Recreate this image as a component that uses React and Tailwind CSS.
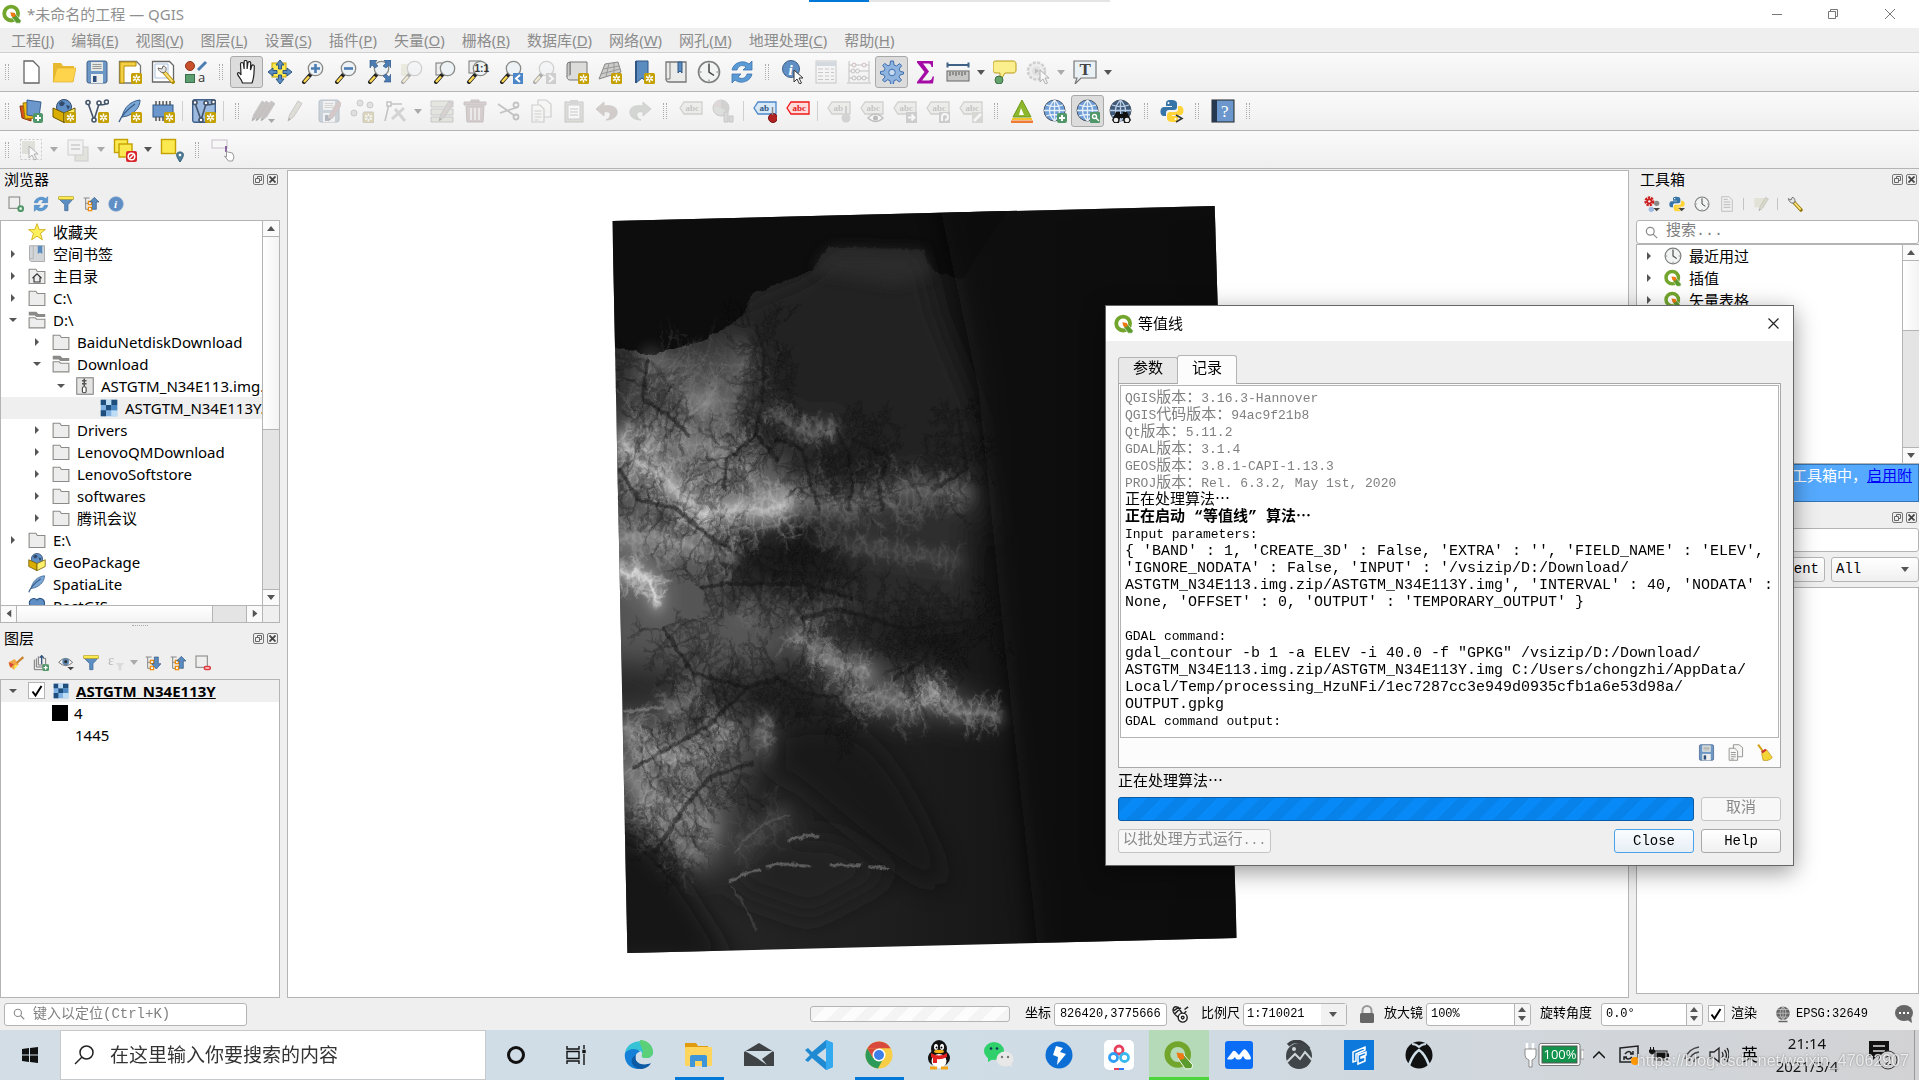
import React, { useState } from 'react';

/* ---------- shared icon parts ---------- */

const Badge = () => (
  <g>
    <rect x="13" y="13" width="11" height="11" rx="1.5" fill="#c4a000" />
    <path d="M18.5 14.5v8M15 16.5l7 4M22 16.5l-7 4" stroke="#fff" strokeWidth="1.5" />
    <circle cx="18.5" cy="18.5" r="1" fill="#c4a000" />
  </g>
);

const Lens = ({ fill = '#edf2f6' }) => (
  <g>
    <path d="M9.5 14.5L3 22" stroke="#222" strokeWidth="4" strokeLinecap="round" />
    <path d="M8 16.5L3 22" stroke="#fcd94e" strokeWidth="2.4" />
    <circle cx="14.5" cy="8.5" r="7.2" fill={fill} stroke="#888a85" strokeWidth="1.3" />
  </g>
);

const Globe = ({ dark }) => (
  <g>
    <circle cx="11.5" cy="11.5" r="10.5" fill={dark ? '#3d5a7c' : '#6f9fd8'} stroke="#4a5563" />
    <path
      d="M11.5 1v21M1 11.5h21M3 6q8.5 3 17 0M3 17q8.5-3 17 0M11.5 1q-10 10.5 0 21M11.5 1q10 10.5 0 21"
      stroke={dark ? '#b9cce2' : '#e6eef7'}
      strokeWidth="1.3"
      fill="none"
    />
  </g>
);

const Tag = ({ fill = '#dcdccb', stroke = '#8d8d80', color = '#666', text = 'abc' }) => (
  <g>
    <path d="M1 9l4-6h18v12H5z" fill={fill} stroke={stroke} strokeWidth="1.3" />
    <text x="6.5" y="12" fontSize="9" fontFamily="Liberation Serif, serif" fontWeight="bold" fill={color}>{text}</text>
  </g>
);

const Pencil = ({ x = 0, color = '#b8b48a' }) => (
  <g transform={`translate(${x} 0)`}>
    <path d="M5 22l1.5-6L15 2l4 2.5L10.5 18z" fill={color} stroke="#777" />
    <path d="M5 22l.7-3 2 1.2z" fill="#333" />
  </g>
);

const Cursor = ({ x = 11, y = 9 }) => (
  <path transform={`translate(${x} ${y})`} d="M1 1v12l3-3 2.5 5 2-1-2.5-5h4z" fill="#fff" stroke="#333" />
);

const Floppy = () => (
  <g>
    <rect x="2" y="1" width="20" height="22" rx="2" fill="#6d97c4" stroke="#41618a" />
    <rect x="6" y="2" width="12" height="9" fill="#e4e7e4" />
    <path d="M7.5 4.5h9M7.5 6.5h9M7.5 8.5h9" stroke="#999" />
    <rect x="6" y="14" width="12" height="9" fill="#eceeee" />
    <rect x="8" y="16" width="3.5" height="6" fill="#2f4f7a" />
  </g>
);

const Pages = () => (
  <g fill="#f6f6f4" stroke="#888a85" strokeWidth="1.2">
    <path d="M9 1h8l5 4v13H9z" />
    <path d="M3 6h8l4 4v13H3z" />
    <path d="M5.5 12h7M5.5 15h7M5.5 18h7M5.5 21h4" />
  </g>
);

const Tree = ({ up }) => (
  <g fill="none">
    <path d="M1 3h9M4 3v17h5M4 11h5" stroke="#888" strokeWidth="1.5" />
    <rect x="8" y="8" width="5" height="5" stroke="#f18b00" strokeWidth="1.8" />
    <rect x="8" y="17" width="5" height="5" stroke="#f18b00" strokeWidth="1.8" />
    <path d={up ? 'M14 20V9h-4l7-7 7 7h-4v11z' : 'M14 3v10h-4l7 8 7-8h-4V3z'} fill="#5a8cc0" stroke="#35557d" />
  </g>
);

const Funnel = () => (
  <g>
    <path d="M1 4h22l-8 9v9h-5v-9z" fill="#5b8fc4" stroke="#36608f" />
    <rect x="1" y="1" width="22" height="4" fill="#fce94f" stroke="#b8a020" />
  </g>
);

const Sync = () => (
  <g fill="#5b9bd5" stroke="#3c73b0" strokeWidth=".8">
    <path d="M2 10C3 3 13-1 19 4l3-3v9h-9l3-3C12 4 8 6 7 10z" />
    <path d="M22 14c-1 7-11 11-17 6l-3 3v-9h9l-3 3c4 3 8 1 9-3z" />
  </g>
);

const Python = () => (
  <g>
    <path d="M11 1c-5 0-5 2-5 4v2h6v1H4c-3 0-3.5 3-3.5 5S1.5 17 4 17h2v-3c0-2 1-3 3-3h5c2 0 3-1 3-3V5c0-3-2-4-6-4z" fill="#3775a9" />
    <path d="M13 23c5 0 5-2 5-4v-2h-6v-1h8c2.5 0 3.5-2 3.5-4.5S22 7 20 7h-2v3c0 2-1 3-3 3h-5c-2 0-3 1-3 3v3c0 3 2 4 6 4z" fill="#ffd43b" />
    <circle cx="8.5" cy="4" r="1" fill="#fff" />
    <circle cx="15.5" cy="20" r="1" fill="#fff" />
  </g>
);

const Clock = () => (
  <g>
    <circle cx="12" cy="12" r="10.5" fill="#f2f4f3" stroke="#7d807d" strokeWidth="1.6" />
    <path d="M12 4v8l5 3.5" stroke="#444" strokeWidth="1.5" fill="none" />
    <path d="M12 2.5v2M12 19.5v2M2.5 12h2M19.5 12h2" stroke="#777" />
  </g>
);

const Qgis = () => (
  <g>
    <circle cx="11" cy="11.5" r="8.3" fill="none" stroke="#72a52b" strokeWidth="4.6" />
    <path d="M11 11l5 1 7 8-1 3h-5l-5-7z" fill="#5b9a2d" stroke="#fff" strokeWidth=".7" />
    <path d="M10 10l5.5.8 1 4-3.5 1.2-2-2z" fill="#ee7913" />
  </g>
);

const Folder = () => (
  <path d="M1.5 3h9l2 3h10v16h-21z" fill="#ededed" stroke="#8b8b87" strokeWidth="1.5" />
);

const BoxGlobe = () => (
  <g>
    <circle cx="12" cy="8" r="7.5" fill="#5f8fc5" stroke="#2f4a6c" />
    <path d="M7 4l3-2 3 2-2 3H8zM14 6l4 1-2 4z" fill="#2f4a6c" />
    <path d="M1 9l11 5v9.5L1 18z" fill="#d9ae00" stroke="#6d5600" />
    <path d="M23 9l-11 5v9.5L23 18z" fill="#fcef6a" stroke="#6d5600" />
  </g>
);

const Feather = () => (
  <g>
    <path d="M4 18C6 8 13 2 22 1c0 7-5 13-13 16z" fill="#7ba7d7" stroke="#3a5f8c" />
    <path d="M1 23c3-8 9-13 16-18" stroke="#3a5f8c" fill="none" strokeWidth="1.4" />
  </g>
);

const VeeLine = () => (
  <g fill="none" stroke="#44546a" strokeWidth="1.6">
    <path d="M3 4l6 17 5-16q5 2 8-1" />
    <circle cx="3" cy="3.5" r="2" fill="#fff" />
    <circle cx="9" cy="21" r="2" fill="#fff" />
    <circle cx="14" cy="4" r="2" fill="#fff" />
    <circle cx="21.5" cy="3" r="2" fill="#fff" />
  </g>
);

const Raster = () => (
  <g>
    <rect x="1" y="1" width="22" height="22" fill="#7fb2e2" />
    <path d="M1 1h7v7H1zM15 1h8v7h-8zM8 8h7v7H8zM1 15h7v8H1z" fill="#1f4e7d" />
    <path d="M8 1h7v7H8zM15 15h8v8h-8z" fill="#bfdcf5" />
    <path d="M15 8h8v7h-8z" fill="#4a86c0" />
  </g>
);

const icons = {
  newFile: <path d="M5 1h9l6 6v16H5z" fill="#fff" stroke="#666" strokeWidth="1.3" />,
  open: (
    <g>
      <path d="M1 3h8l2 3h11v15H1z" fill="#e8b92f" />
      <path d="M5 8h19l-3 14H1z" fill="#fdd44b" stroke="#e0b030" strokeWidth=".7" />
    </g>
  ),
  save: <Floppy />,
  newLayout: (
    <g>
      <path d="M1.5 1.5h17l4 4V23h-21z" fill="#fff" stroke="#777" strokeWidth="1.3" />
      <path d="M2 2h16v4H6v17H2z" fill="#f4cf45" stroke="#b58f00" />
      <Badge />
    </g>
  ),
  layoutMgr: (
    <g>
      <path d="M1.5 1.5h17l4 4V22h-21z" fill="#fff" stroke="#666" strokeWidth="1.3" />
      <path d="M4 4h13v14H4z" fill="none" stroke="#a9bfe0" />
      <path d="M13 12l9 10" stroke="#b58f00" strokeWidth="4" strokeLinecap="round" />
      <path d="M13.5 12.5l8 9" stroke="#fce07a" strokeWidth="2" />
      <path d="M7 8l4 1 1-3c3 0 4 3 2.5 5.5C12 14 8 12 7 8z" fill="#e5e5e5" stroke="#666" />
    </g>
  ),
  style: (
    <g>
      <circle cx="6" cy="6" r="4.5" fill="#c8502c" stroke="#90351a" />
      <path d="M14 10l8-8" stroke="#4b7db2" strokeWidth="3" />
      <rect x="1.5" y="14.5" width="9" height="8" fill="#5d9e70" stroke="#3b6f4c" />
      <text x="14" y="22" fontSize="13" fontFamily="Open Sans, sans-serif" fill="#333">a</text>
    </g>
  ),
  hand: (
    <path
      d="M7.5 23c-1-4-4-6-5-9 0-2 2-2 3.5 1L5.5 4c0-2 2.6-2 3 0l.6 5V2c0-2 3-2 3 0v7l.8-6c.2-2 3-1.6 2.8.4L15.5 10l1.2-4c.7-1.8 2.9-1.2 2.6.7C19 10 19.5 17 17 23z"
      fill="#fff"
      stroke="#222"
      strokeWidth="1.2"
    />
  ),
  panSel: (
    <g>
      <rect x="4" y="3" width="14" height="14" fill="#fce94f" stroke="#c4a000" />
      <path d="M12 0l4 5h-2.5v4h-3V5H8zM12 24l-4-5h2.5v-4h3v4H16zM0 12l5-4v2.5h4v3H5V16zM24 12l-5 4v-2.5h-4v-3h4V8z" fill="#5a8cc0" stroke="#2f5683" />
    </g>
  ),
  zoomIn: <g><Lens /><path d="M14.5 4v9M10 8.5h9" stroke="#4b7db2" strokeWidth="2.6" /></g>,
  zoomOut: <g><Lens /><path d="M10 8.5h9" stroke="#4b7db2" strokeWidth="2.6" /></g>,
  zoomFull: (
    <g>
      <Lens />
      <path d="M3 0h7L8 3l3 3-3 2-3-3-2 3zM24 0h-7l2 3-3 3 3 2 3-3 2 3zM24 22h-7l2-3-3-3 3-2 3 3 2-3z" fill="#4b7db2" stroke="#2f5683" strokeWidth=".6" />
    </g>
  ),
  zoomSel: <g><rect x="1" y="4" width="12" height="12" fill="#dcd79a" /><Lens /></g>,
  zoomLayer: <g><rect x="3" y="3" width="12" height="12" fill="#eee" stroke="#777" /><Lens /></g>,
  zoomNative: (
    <g>
      <rect x="3" y="1" width="12" height="12" fill="#eee" stroke="#777" />
      <Lens />
      <text x="8.5" y="12" fontSize="10" fontWeight="bold" fontFamily="Liberation Sans, sans-serif" fill="#333">1:1</text>
    </g>
  ),
  zoomLast: <g><Lens /><rect x="14" y="13" width="10" height="11" fill="#4b86c8" /><path d="M21 15l-4 3.5 4 3.5" stroke="#fff" strokeWidth="2" fill="none" /></g>,
  zoomNext: <g><Lens /><rect x="14" y="13" width="10" height="11" fill="#8c8c8c" /><path d="M17 15l4 3.5-4 3.5" stroke="#fff" strokeWidth="2" fill="none" /></g>,
  newMap: <g><path d="M5 2h17v18H5c-3 0-3-3-3-3s0-2 3-2z" fill="#dcdcda" stroke="#777" /><path d="M2 17V5q0-3 3-3v13" fill="#c8c8c6" stroke="#777" /><Badge /></g>,
  new3d: <g><path d="M7 4l13-2 3 10-22 7z" fill="#ccccca" stroke="#888" /><path d="M5 9l16-3M3 14l19-5M11 3L8 17M16 2l0 13" stroke="#999" /><Badge /></g>,
  newMark: <g><path d="M5 1h12v22l-6-5-6 5z" fill="#5a8cc0" stroke="#2f5683" /><path d="M5 1v22" stroke="#2f5683" strokeWidth="2" /><Badge /></g>,
  marks: <g><path d="M2 2h20v20H5c-3 0-3-3-3-3z" fill="#ebebe9" stroke="#777" strokeWidth="1.3" /><path d="M6 2v17H2" stroke="#777" fill="none" /><path d="M14 2h4v11l-2-2-2 2z" fill="#5a8cc0" stroke="#2f5683" /></g>,
  clock: <Clock />,
  refresh: <Sync />,
  identify: <g><circle cx="10" cy="9" r="8.5" fill="#5f8fc5" stroke="#41618a" /><text x="7.5" y="14.5" fontSize="15" fontStyle="italic" fontWeight="bold" fontFamily="Liberation Serif, serif" fill="#fff">i</text><Cursor x={12} y={9} /></g>,
  table: <g><rect x="2" y="1" width="20" height="22" fill="#f4f4f4" stroke="#777" /><path d="M2 4h20" stroke="#88a5c4" strokeWidth="4" /><path d="M4 9h5M11 9h4M17 9h3M4 12.5h5M11 12.5h4M17 12.5h3M4 16h5M11 16h4M17 16h3M4 19.5h5M11 19.5h4M17 19.5h3" stroke="#777" /></g>,
  abacus: <g fill="#eee" stroke="#666"><path d="M2 1v21M22 1v21M0 23h24M2 5h20M2 11h20M2 18h20" /><circle cx="7" cy="5" r="2" stroke="#a44" /><circle cx="17" cy="5" r="2" stroke="#a44" /><circle cx="6" cy="11" r="2" /><circle cx="10.5" cy="11" r="2" /><circle cx="7" cy="18" r="2" /><circle cx="12" cy="18" r="2" /><circle cx="17" cy="18" r="2" /></g>,
  gear: (
    <g stroke="#3f6fae" fill="#8fb4e0">
      <path d="M10.5 1h3l.5 4 2.5 1 3.2-2.4 2 2L19.2 9l1 2.5 3.3.5v2l-3.5 1-1 2 2.5 3-2 2-3.2-2.3-2.3 1-.7 3.8h-2.6L10 20.7l-2.3-1L4.5 22l-2-2L5 17l-1-2-3.5-1v-2.5L4 11l1-2.3L2.7 5.4l2-2L8 5.8 10 5z" />
      <circle cx="12" cy="12.5" r="3.3" fill="#c6daf0" />
    </g>
  ),
  sigma: <path d="M4 1h16v6h-1.5c-.5-3-1.5-3.5-4-3.5H10l6 8-7 9h6c3 0 4-1 4.5-4H21l-1 7H4v-1.5l7.5-10L4 2.5z" fill="#a50ca5" />,
  measure: <g><path d="M1 5h22M1.5 2.5v5M22.5 2.5v5" stroke="#3d6286" strokeWidth="2" /><rect x="1" y="11" width="22" height="10" fill="#c8c8c6" stroke="#666" /><path d="M4 12v4M7 12v3M10 12v4M13 12v3M16 12v4M19 12v3" stroke="#555" /></g>,
  tip: <g><path d="M3 1h17c2 0 3 1 3 3v6c0 2-1 3-3 3h-8l-5 8v-8H3c-2 0-3-1-3-3V4c0-2 1-3 3-3z" fill="#fbef8d" stroke="#b99a1a" /><circle cx="6" cy="20" r="4" fill="#65a36c" stroke="#3f6f45" /></g>,
  run: <g><circle cx="10.5" cy="11" r="8.5" fill="#ddd" stroke="#888" strokeWidth="2.5" strokeDasharray="3 1.5" /><circle cx="10.5" cy="11" r="4.5" fill="#bbb" /><path d="M9 8.5v5l4-2.5z" fill="#555" /><Cursor x={13} y={9} /></g>,
  textNote: <g><path d="M1 1h22v17H8l-6 6 2-6H1z" fill="#e9f1f5" stroke="#777" strokeWidth="1.2" /><text x="6.5" y="15" fontSize="17" fontWeight="bold" fontFamily="Liberation Serif, serif" fill="#444">T</text></g>,

  dsm: <g><path d="M1 7l11 0 0 15-9-3z" fill="#d9541e" stroke="#8f3510" /><path d="M4 4l12-1v16L6 20z" fill="#f0b90c" stroke="#9c7500" /><path d="M8 1l14 2-2 15-12-2z" fill="#6b97cc" stroke="#3a5f8c" /><rect x="14" y="14" width="10" height="10" rx="2" fill="#4f9668" /><path d="M19 16v6M16 19h6" stroke="#fff" strokeWidth="2" /></g>,
  gpkg: <g><BoxGlobe /><Badge /></g>,
  shp: <g><VeeLine /><Badge /></g>,
  spatialite: <g><Feather /><Badge /></g>,
  memory: <g><rect x="2" y="6" width="20" height="12" fill="#6b97cc" stroke="#2f5683" /><path d="M5 2v4M8.5 2v4M12 2v4M15.5 2v4M19 2v4M5 18v4M8.5 18v4M12 18v4" stroke="#555" strokeWidth="1.5" /><Badge /></g>,
  virtual: <g><rect x=".7" y=".7" width="22.6" height="22.6" rx="2" fill="#9dbbe0" stroke="#41618a" strokeWidth="1.4" /><VeeLine /><Badge /></g>,

  pencils: <g><Pencil x={-4} color="#806060" /><Pencil x={0} color="#806060" /><Pencil x={5} color="#806060" /><path d="M17 20h7l-3.5 4z" fill="#222" /></g>,
  pencil: <Pencil x={-1} />,
  saveEdit: <g><Floppy /><Pencil x={6} color="#c07070" /></g>,
  addPoint: <g fill="#bbb" stroke="#777"><circle cx="4" cy="14" r="3" /><circle cx="10" cy="4" r="3" /><circle cx="20" cy="6" r="3" /><Badge /></g>,
  vertex: <g fill="none" stroke="#666" strokeWidth="1.5"><path d="M2 22L6 5h13" /><rect x="4" y="3" width="4" height="4" fill="#fff" /><path d="M9 20l12-11M12 10l10 12" strokeWidth="3" stroke="#999" /></g>,
  modify: <g><path d="M1 2h22v6H1zM1 10h22v6H1zM1 18h22v5H1z" fill="#c9c9ae" stroke="#777" /><Pencil x={4} color="#b09090" /></g>,
  trash: <g><path d="M3 7h18l-1 16H4zM1 3h22v3H1zM8 1h8v2H8z" fill="#b08484" stroke="#806060" /><path d="M8 9v12M12 9v12M16 9v12" stroke="#eee" strokeWidth="1.5" /></g>,
  cut: <g fill="none" stroke="#666" strokeWidth="1.8"><path d="M2 5l17 12M4 14l18-6" /><circle cx="20" cy="6" r="2.5" /><circle cx="20" cy="18" r="2.5" /></g>,
  copy: <Pages />,
  paste: <g><rect x="3" y="3" width="18" height="20" fill="#b5b59d" stroke="#777" /><rect x="6" y="6" width="12" height="14" fill="#fff" stroke="#888" /><rect x="8" y="1" width="8" height="4" fill="#999" /><path d="M8 10h8M8 13h8M8 16h8" stroke="#777" /></g>,
  undo: <path d="M9 3L1 10l8 7v-4c5-1 7 1 6 4-.5 2-2 3-4 4 7 0 12-4 11-9-.6-4-5-6-13-5z" fill="#a08078" stroke="#8f7a74" />,
  redo: <path d="M15 3l8 7-8 7v-4c-5-1-7 1-6 4 .5 2 2 3 4 4-7 0-12-4-11-9 .6-4 5-6 13-5z" fill="#95a095" stroke="#808a80" />,
  label: <Tag />,
  pie: <g><circle cx="9" cy="9" r="8" fill="#a9b9a9" stroke="#777" /><path d="M9 9V1a8 8 0 0 1 7 12z" fill="#8f8f8f" /><path d="M9 9L1 7a8 8 0 0 1 8-6z" fill="#c49c9c" /><path d="M12 13h4v10h-4zM17 17h4v6h-4z" fill="#aaa" stroke="#777" /></g>,
  labelPin: <g><Tag fill="#d7e8f8" stroke="#4b86c8" color="#2f5683" text="ab" /><circle cx="20" cy="19" r="4.5" fill="#b22222" stroke="#7c1515" /><path d="M19.5 8v8" stroke="#888" strokeWidth="1.5" /></g>,
  labelRed: <Tag fill="#ffdada" stroke="#f01414" color="#e02020" />,
  labelMove: <g><Tag text="ab" /><circle cx="19" cy="19" r="4.5" fill="#999" /><path d="M19 7v8" stroke="#888" strokeWidth="2" /></g>,
  labelEye: <g><Tag /><path d="M8 19q7-8 15 0-7 7-15 0z" fill="#fff" stroke="#666" strokeWidth="1.5" /><circle cx="15.5" cy="19" r="2.5" fill="#555" /></g>,
  labelArrow: <g><Tag /><rect x="13" y="13" width="11" height="11" fill="#888" /><path d="M15 18.5h6M18.5 15.5l3 3-3 3" stroke="#fff" strokeWidth="2" fill="none" /></g>,
  labelTurn: <g><Tag /><rect x="13" y="13" width="11" height="11" fill="#888" /><path d="M16 22v-4a3 3 0 1 1 3 3" stroke="#fff" strokeWidth="2" fill="none" /></g>,
  labelEdit: <g><Tag /><rect x="13" y="13" width="11" height="11" fill="#a5a590" /><path d="M15 22l7-7" stroke="#fff" strokeWidth="2.5" /></g>,
  grass: <g><path d="M12 1l9 17H3z" fill="#8db82c" stroke="#6f9a1c" /><path d="M11 9l3 7h-5z" fill="#fff" /><path d="M2 19h20v2H2z" fill="#f2c52e" /><path d="M1 21.5h22V24H1z" fill="#ef7a30" /></g>,
  globeAdd: <g><Globe /><rect x="14" y="14" width="10" height="10" rx="2" fill="#4f9668" /><path d="M19 16v6M16 19h6" stroke="#fff" strokeWidth="2" /></g>,
  globeFind: <g><Globe /><rect x="14" y="13" width="10" height="11" rx="1" fill="#4f9668" /><circle cx="18.5" cy="17.5" r="2" stroke="#fff" strokeWidth="1.4" fill="none" /><path d="M20 19l3 3" stroke="#fff" strokeWidth="1.4" /></g>,
  binoc: <g><Globe dark /><path d="M7 13h4v2h3v-2h4l4 8-2 3h-5l-1-5h-3l-1 5H5l-2-3z" fill="#111" /><circle cx="7" cy="21" r="2.3" fill="#eee" /><circle cx="18" cy="21" r="2.3" fill="#eee" /></g>,
  pyConsole: <g><Python /><path d="M16 16l6 3.5-6 3.5" stroke="#333" strokeWidth="1.6" fill="none" /></g>,
  help: <g><rect x="1" y="1" width="22" height="22" fill="#6b97cc" stroke="#222" /><rect x="1" y="1" width="5" height="22" fill="#26384f" /><text x="10" y="18" fontSize="17" fontFamily="Liberation Serif, serif" fill="#fff">?</text></g>,

  select: <g><rect x="1.5" y="1.5" width="21" height="20" fill="none" stroke="#777" strokeDasharray="2 2" /><rect x="3" y="3" width="13" height="13" fill="#bdbda0" /><Cursor x={9} y={7} /></g>,
  selForm: <g><rect x="9" y="9" width="13" height="14" fill="#c8c8ac" stroke="#888" /><rect x="2" y="2" width="15" height="15" fill="#eee" stroke="#888" /><path d="M5 7h9M5 11h9" stroke="#999" strokeWidth="2" /></g>,
  deselect: <g><rect x="1.5" y="1.5" width="13" height="13" fill="#fce94f" stroke="#c4a000" strokeWidth="1.4" /><rect x="6" y="6" width="13" height="13" fill="#fce94f" stroke="#c4a000" strokeWidth="1.4" /><rect x="13" y="13" width="11" height="11" rx="2" fill="#d9262c" /><circle cx="18.5" cy="18.5" r="3.3" stroke="#fff" strokeWidth="1.5" fill="none" /><path d="M16.5 20.5l4-4" stroke="#fff" strokeWidth="1.5" /></g>,
  selPlace: <g><rect x="1.5" y="1.5" width="14" height="14" fill="#fce94f" stroke="#c4a000" strokeWidth="1.4" /><path d="M20 24c-5-7-4-10 0-10s5 3 0 10z" fill="#4f7f9c" stroke="#335a73" /><circle cx="20" cy="17" r="1.3" fill="#fff" /></g>,
  touch: <g><rect x="1" y="2" width="15" height="8" fill="#f7f7f7" stroke="#c9c0c9" /><path d="M15 8v6" stroke="#6b3a8c" strokeWidth="1.5" /><path d="M15.5 13v6l-2-1 4 5h4l1.5-4-1.5-4-5-1z" fill="#fff" stroke="#999" /></g>,

  addLayer: <g><rect x="1.5" y="1.5" width="16" height="17" fill="none" stroke="#888a85" strokeWidth="1.6" /><circle cx="19" cy="19" r="5" fill="#4f9668" /><circle cx="19" cy="19" r="2" fill="#e5f3e9" /></g>,
  removeLayer: <g><rect x="1.5" y="1.5" width="17" height="17" fill="none" stroke="#888a85" strokeWidth="1.6" /><rect x="13" y="16" width="11" height="7" rx="3" fill="#e0383e" /><path d="M15.5 19.5h6" stroke="#fff" strokeWidth="1.8" /></g>,
  filter: <Funnel />,
  collapse: <Tree up />,
  expand: <Tree />,
  info: <g><circle cx="12" cy="12" r="11" fill="#5f8fc5" stroke="#8aa9cd" /><text x="9" y="18" fontSize="17" fontStyle="italic" fontWeight="bold" fontFamily="Liberation Serif, serif" fill="#fff">i</text></g>,
  star: <path d="M12 .8l3 8h8.2l-6.5 5 2.5 8.7L12 17.5l-7.2 5 2.5-8.7-6.5-5H9z" fill="#fef05c" stroke="#c9a100" />,
  home: <g><Folder /><path d="M6 15l6-6 6 6M8 14v6h8v-6" fill="none" stroke="#333" strokeWidth="1.5" /></g>,
  folder: <Folder />,
  folderOpen: <g><path d="M1 1h10l3 3h9v4H11L9 6H1z" fill="#8b8b87" /><path d="M1.5 9h8l2 2h11v11.5h-21z" fill="#ededed" stroke="#8b8b87" strokeWidth="1.5" /></g>,
  zip: <g><rect x="1" y="1" width="22" height="22" fill="#e4e4e2" stroke="#888" strokeWidth="1.5" /><path d="M10 2h2v2h2v2h-2v2h2v2h-2v2h-2v-2H8v-2h2V6H8V4h2z" fill="#555" /><rect x="8.5" y="13" width="5" height="8" rx="2" fill="#fff" stroke="#444" strokeWidth="1.5" /></g>,
  raster: <Raster />,
  geopackage: <BoxGlobe />,
  feather: <Feather />,
  postgis: <path d="M2 6c2-5 8-5 10-2 3-4 10-2 10 4 0 7-3 9-4 14H6C5 16 1 12 2 6z" fill="#5f8fc5" stroke="#2f5683" strokeWidth="1.5" />,
  brush: <g><path d="M1 11l9-5 6 8-7 8-7-5z" fill="#f0a848" /><path d="M1 11l8 3-5 5z" fill="#d64a36" /><path d="M9 22l6-7-5 0z" fill="#fce94f" /><path d="M13 12L23 3" stroke="#c9822e" strokeWidth="3.5" /></g>,
  group: <g fill="none" stroke="#777" strokeWidth="1.5"><path d="M2 7v15h12M5 5v13h10M8 2v13h11V5h-4" /><path d="M13 14V1l-3 3M13 1l3 3" stroke="#35557d" strokeWidth="2" /><rect x="14" y="14" width="10" height="10" rx="2" fill="#4f9668" stroke="none" /><path d="M19 16v6M16 19h6" stroke="#fff" strokeWidth="2" /></g>,
  eye: <g><path d="M1 11Q11-1 22 11 12 21 1 11z" fill="#eef3f7" stroke="#777" strokeWidth="1.5" /><circle cx="11.5" cy="10" r="5" fill="#5b82a8" /><circle cx="11.5" cy="10" r="2" fill="#222" /><path d="M14 18h10l-5 5z" fill="#444" /></g>,
  epsilon: <g><text x="0" y="15" fontSize="22" fontFamily="Liberation Serif, serif" fill="#666">ε</text><path d="M12 12h12l-4 5v6h-4v-6z" fill="#bbb" /></g>,
  gears: <g><circle cx="8" cy="8" r="5" fill="none" stroke="#cc2222" strokeWidth="5" strokeDasharray="3 1.2" /><circle cx="8" cy="8" r="4.5" fill="#cc2222" /><circle cx="8" cy="8" r="1.8" fill="#fff" /><circle cx="19" cy="11" r="4" fill="#888" /><circle cx="11" cy="20" r="4" fill="#9dbbe0" /><path d="M14 18h10l-5 5z" fill="#444" /></g>,
  pyMenu: <g><Python /><path d="M14 18h10l-5 5z" fill="#444" /></g>,
  doc: <g><path d="M4 1h11l5 5v17H4z" fill="#eee" stroke="#777" strokeWidth="1.4" /><path d="M7 9h10M7 13h10M7 17h10M7 5h6" stroke="#666" strokeWidth="1.4" /></g>,
  editModel: <g><path d="M2 3h15v14H2z" fill="#cfcfb2" /><Pencil x={4} /></g>,
  wrench: <g><path d="M10 9l11 12" stroke="#8d7400" strokeWidth="5" strokeLinecap="round" /><path d="M11 10l9.5 10.5" stroke="#f7dd73" strokeWidth="3" /><path d="M2 4l4 2 2-4c4 1 5 5 3 8-4 2-8-1-9-6z" fill="#e5e5e5" stroke="#555" strokeWidth="1.2" /></g>,
  qgis: <Qgis />,
  bookmark: <g><path d="M2 1h20v21H5c-3 0-3-3-3-3z" fill="#d3d6d9" stroke="#999" /><path d="M7 1v17H2" stroke="#aaa" fill="none" /><path d="M13 1h6v11l-3-2-3 2z" fill="#5a8cc0" /></g>,
  broom: <g><path d="M3 1l8 11" stroke="#d6a018" strokeWidth="3" /><path d="M8 13l7-5 8 11c-3 4-8 5-13 4z" fill="#f4d537" stroke="#b89418" /><path d="M8 12l6-4" stroke="#c33" strokeWidth="3" /></g>,
};

const Icon = ({ name, size = 'size-6', className = '' }) => (
  <svg viewBox="0 0 24 24" className={`${size} shrink-0 ${className}`} aria-hidden="true">{icons[name]}</svg>
);

const Down = ({ color = 'text-[#555]', className = '' }) => (
  <svg viewBox="0 0 8 5" className={`h-[5px] w-2 shrink-0 ${color} ${className}`} aria-hidden="true"><path d="M0 0h8L4 5z" fill="currentColor" /></svg>
);

/* ---------- toolbars ---------- */
// '|' is a grip, '/' a separator, 'v' a drop-down arrow, '-name' disabled, '+name' pressed
const rows = [
  ['newFile', 'open', 'save', 'newLayout', 'layoutMgr', 'style', '|', '+hand', 'panSel', 'zoomIn', 'zoomOut', 'zoomFull', '-zoomSel', 'zoomLayer', 'zoomNative', 'zoomLast', '-zoomNext', 'newMap', 'new3d', 'newMark', 'marks', 'clock', 'refresh', '|', 'identify', '-table', '-abacus', '+gear', 'sigma', 'measure', 'v', 'tip', '-run', '-v', 'textNote', 'v'],
  ['dsm', 'gpkg', 'shp', 'spatialite', 'memory', '/', 'virtual', '/', '|', '-pencils', '-pencil', '-saveEdit', '-addPoint', '-vertex', '-v', '-modify', '-trash', '-cut', '-copy', '-paste', '-undo', '-redo', '|', '-label', '-pie', '/', 'labelPin', 'labelRed', '/', '-labelMove', '-labelEye', '-labelArrow', '-labelTurn', '-labelEdit', '|', 'grass', 'globeAdd', '+globeFind', 'binoc', '|', 'pyConsole', '|', 'help', '|'],
  ['-select', '-v', '-selForm', '-v', 'deselect', 'v', 'selPlace', '|', 'touch'],
];

const Grip = ({ first }) => (
  <span className={`flex h-8 shrink-0 items-center justify-center gap-[2px] ${first ? 'w-[14px]' : 'w-[18px]'}`}>
    <span className="h-4 border-l border-dotted border-[#aaa]" />
    <span className="h-4 border-l border-dotted border-[#aaa]" />
  </span>
);

function ToolItem({ item }) {
  if (item === '|') return <Grip />;
  if (item === '/') return <span className="mr-1 ml-[3px] h-5 w-px shrink-0 bg-[#cfcfcf]" />;
  if (item === 'v' || item === '-v') {
    return <span className="flex w-[14px] shrink-0 justify-center"><Down color={item === 'v' ? 'text-[#555]' : 'text-[#aaa]'} /></span>;
  }
  const off = item[0] === '-';
  const on = item[0] === '+';
  const name = off || on ? item.slice(1) : item;
  return (
    <button
      type="button"
      aria-label={name}
      disabled={off}
      className={`flex h-8 w-[33px] shrink-0 items-center justify-center rounded-[3px] border ${on ? 'border-[#a9a9a9] bg-[#dcdcdc]' : 'border-transparent'}`}
    >
      <Icon name={name} className={off ? 'opacity-35 saturate-50' : ''} />
    </button>
  );
}

const menus = [['工程', 'J'], ['编辑', 'E'], ['视图', 'V'], ['图层', 'L'], ['设置', 'S'], ['插件', 'P'], ['矢量', 'O'], ['栅格', 'R'], ['数据库', 'D'], ['网络', 'W'], ['网孔', 'M'], ['地理处理', 'C'], ['帮助', 'H']];

function Header() {
  return (
    <header>
      <div className="flex h-7 items-center bg-white pl-[2px] text-[15px] text-[#8f8f8f]">
        <Icon name="qgis" size="size-5" />
        <span className="ml-[5px]">*未命名的工程 — QGIS</span>
        <div className="ml-auto flex h-full text-[#777]">
          <button type="button" aria-label="最小化" className="flex w-14 items-center justify-center"><svg viewBox="0 0 10 10" className="size-[10px]"><path d="M0 5.5h10" stroke="currentColor" /></svg></button>
          <button type="button" aria-label="还原" className="flex w-14 items-center justify-center"><svg viewBox="0 0 10 10" className="size-[10px]" fill="none" stroke="currentColor"><path d="M.5 2.5h7v7h-7zM2.5 2.5v-2h7v7h-2" /></svg></button>
          <button type="button" aria-label="关闭窗口" className="flex w-[58px] items-center justify-center"><svg viewBox="0 0 10 10" className="size-[10px]"><path d="M0 0l10 10M10 0L0 10" stroke="currentColor" /></svg></button>
        </div>
      </div>
      <nav className="flex h-[25px] items-center gap-[17px] border-b border-[#d0d0d0] pl-[11px] text-[15px] leading-5 text-[#8c8c8c]">
        {menus.map(([label, key]) => (
          <button type="button" key={key} className="whitespace-nowrap">{label}(<u>{key}</u>)</button>
        ))}
      </nav>
      {rows.map((row, i) => (
        <div key={i} className={`flex items-center border-b border-[#b4b4b4] bg-linear-to-b from-[#fafafa] to-[#efefef] ${i === 2 ? 'h-[38px]' : 'h-[39px]'}`}>
          <Grip first />
          {row.map((item, n) => <ToolItem key={n} item={item} />)}
        </div>
      ))}
    </header>
  );
}

/* ---------- docks ---------- */

function DockTitle({ children }) {
  return (
    <div className="flex h-[21px] shrink-0 items-center gap-[3px] pr-[2px] pl-1 text-[15px] text-black">
      <h2 className="flex-1">{children}</h2>
      <button type="button" aria-label="浮动" className="flex size-[11px] items-center justify-center rounded-[2px] border border-[#777]">
        <svg viewBox="0 0 7 7" className="size-[7px]" fill="none" stroke="#666"><path d="M.5 2.5h4v4h-4zM2.5 2V.5h4v4H5" /></svg>
      </button>
      <button type="button" aria-label="关闭" className="flex size-[11px] items-center justify-center rounded-[2px] border border-[#777]">
        <svg viewBox="0 0 7 7" className="size-[7px]"><path d="M.5.5l6 6M6.5.5l-6 6" stroke="#444" strokeWidth="1.8" /></svg>
      </button>
    </div>
  );
}

const MiniBar = ({ items }) => (
  <div className="flex h-[30px] shrink-0 items-center pb-[2px] pl-[3px]">
    {items.map((item, i) => {
      if (item === '/') return <span key={i} className="mx-1 h-3 w-px bg-[#c4c4c4]" />;
      if (item === '-v') return <span key={i} className="flex w-[12px] justify-center"><Down color="text-[#aaa]" /></span>;
      const off = item[0] === '-';
      const name = off ? item.slice(1) : item;
      return (
        <button type="button" key={i} aria-label={name} disabled={off} className="flex w-[25px] justify-center">
          <Icon name={name} size="size-4" className={off ? 'opacity-40' : ''} />
        </button>
      );
    })}
  </div>
);

const Arrow = ({ open }) => (
  <svg viewBox="0 0 8 8" className="size-2 shrink-0 text-[#555]" aria-hidden="true">
    {open !== undefined && <path d={open ? 'M0 2h8L4 6z' : 'M2 0v8l4-4z'} fill="currentColor" />}
  </svg>
);

const browserRows = [
  [0, undefined, 'star', '收藏夹'],
  [0, false, 'bookmark', '空间书签'],
  [0, false, 'home', '主目录'],
  [0, false, 'folder', 'C:\\'],
  [0, true, 'folderOpen', 'D:\\'],
  [1, false, 'folder', 'BaiduNetdiskDownload'],
  [1, true, 'folderOpen', 'Download'],
  [2, true, 'zip', 'ASTGTM_N34E113.img.zip'],
  [3, undefined, 'raster', 'ASTGTM_N34E113Y.img'],
  [1, false, 'folder', 'Drivers'],
  [1, false, 'folder', 'LenovoQMDownload'],
  [1, false, 'folder', 'LenovoSoftstore'],
  [1, false, 'folder', 'softwares'],
  [1, false, 'folder', '腾讯会议'],
  [0, false, 'folder', 'E:\\'],
  [0, undefined, 'geopackage', 'GeoPackage'],
  [0, undefined, 'feather', 'SpatiaLite'],
  [0, undefined, 'postgis', 'PostGIS'],
];

const indents = ['pl-2', 'pl-8', 'pl-14', 'pl-20'];

function TreeRow({ level = 0, open, icon, label, active }) {
  return (
    <li className={`flex h-[22px] items-center text-[15px] whitespace-nowrap ${indents[level]} ${active ? 'bg-[#efefef]' : ''}`}>
      <Arrow open={open} />
      <Icon name={icon} size="size-[18px]" className="ml-[11px]" />
      <span className="ml-[7px]">{label}</span>
    </li>
  );
}

const ScrollY = ({ thumb, rest }) => (
  <div className="flex w-[17px] shrink-0 flex-col border-l border-[#b4b4b4] bg-[#e4e4e4]">
    <span className="flex h-4 items-center justify-center border-b border-[#b4b4b4] bg-[#fafafa]"><Down className="rotate-180" /></span>
    <span className={`border-b border-[#b4b4b4] bg-linear-to-r from-white to-[#f3f3f3] ${thumb}`} />
    <span className={rest} />
    <span className="flex h-4 items-center justify-center border-t border-[#b4b4b4] bg-[#fafafa]"><Down /></span>
  </div>
);

function LeftDocks() {
  const [shown, setShown] = useState(true);
  return (
    <aside className="flex w-[280px] shrink-0 flex-col">
      <section className="flex min-h-0 flex-[455] flex-col">
        <DockTitle>浏览器</DockTitle>
        <MiniBar items={['addLayer', 'refresh', 'filter', 'collapse', 'info']} />
        <div className="flex min-h-0 flex-1 flex-col border border-[#b4b4b4] bg-white">
          <div className="flex min-h-0 flex-1">
            <ul className="min-w-0 flex-1 overflow-hidden">
              {browserRows.map(([level, open, icon, label]) => (
                <TreeRow key={label} level={level} open={open} icon={icon} label={label} active={level === 3} />
              ))}
            </ul>
            <ScrollY thumb="flex-[192]" rest="flex-[158]" />
          </div>
          <div className="flex h-[17px] shrink-0 border-t border-[#b4b4b4] bg-[#efefef]">
            <span className="flex w-4 items-center justify-center border-r border-[#b4b4b4] bg-[#fafafa]"><Down className="rotate-90" /></span>
            <span className="flex-[195] border-r border-[#b4b4b4] bg-linear-to-b from-white to-[#f3f3f3]" />
            <span className="flex-[33] bg-[#e4e4e4]" />
            <span className="flex w-[17px] items-center justify-center border-x border-[#b4b4b4] bg-[#fafafa]"><Down className="-rotate-90" /></span>
            <span className="w-4" />
          </div>
        </div>
      </section>
      <div className="flex h-[5px] items-center justify-center"><span className="w-4 border-t border-dotted border-[#aaa]" /></div>
      <section className="flex min-h-0 flex-[371] flex-col">
        <DockTitle>图层</DockTitle>
        <MiniBar items={['brush', 'group', 'eye', 'filter', '-epsilon', '-v', 'expand', 'collapse', 'removeLayer']} />
        <div className="min-h-0 flex-1 border border-[#b4b4b4] bg-white">
          <label className="flex h-[22px] items-center bg-[#efefef] pl-2 text-[15px]">
            <Arrow open />
            <Check checked={shown} onChange={() => setShown(!shown)} className="ml-[11px]" />
            <Icon name="raster" size="size-4" className="ml-2" />
            <span className="ml-[7px] font-bold underline">ASTGTM_N34E113Y</span>
          </label>
          <div className="flex h-[22px] items-center pl-[51px] text-[15px]"><span className="mr-[6px] size-4 bg-black" />4</div>
          <div className="flex h-[22px] items-center pl-[74px] text-[15px]">1445</div>
        </div>
      </section>
    </aside>
  );
}

const Check = ({ className = '', ...props }) => (
  <span className={`grid size-[17px] shrink-0 place-items-center ${className}`}>
    <input type="checkbox" {...props} className="peer col-start-1 row-start-1 size-[17px] appearance-none border border-[#b4b4b4] bg-white" />
    <svg viewBox="0 0 12 12" className="pointer-events-none col-start-1 row-start-1 hidden size-3 peer-checked:block" aria-hidden="true"><path d="M1.5 6.5l3 4L10.5 1" stroke="#000" strokeWidth="2" fill="none" /></svg>
  </span>
);

const Search = ({ className = 'size-4' }) => (
  <svg viewBox="0 0 16 16" className={`shrink-0 ${className}`} fill="none" stroke="#8a8a8a" strokeWidth="1.5" aria-hidden="true">
    <circle cx="6.5" cy="6.5" r="4.8" />
    <path d="M10 10l5 5" />
  </svg>
);

function RightDocks() {
  return (
    <aside className="flex w-[283px] shrink-0 flex-col pb-1">
      <section className="flex min-h-0 flex-[335] flex-col">
        <DockTitle>工具箱</DockTitle>
        <MiniBar items={['gears', 'pyMenu', 'clock', '-doc', '/', '-editModel', '/', 'wrench']} />
        <label className="flex h-6 shrink-0 items-center rounded-[3px] border border-[#b4b4b4] bg-white pl-2">
          <Search className="size-[13px]" />
          <input aria-label="搜索" placeholder="搜索..." className="ml-2 min-w-0 flex-1 font-['Liberation_Mono','Noto_Sans_CJK_SC',monospace] text-[15px] leading-5 outline-none placeholder:text-[#808080]" />
        </label>
        <div className="flex min-h-0 flex-1 border border-r-0 border-[#b4b4b4] bg-white">
          <ul className="min-w-0 flex-1 overflow-hidden">
            <TreeRow open={false} icon="clock" label="最近用过" />
            <TreeRow open={false} icon="qgis" label="插值" />
            <TreeRow open={false} icon="qgis" label="矢量表格" />
          </ul>
          <ScrollY thumb="flex-[70]" rest="flex-[116]" />
        </div>
        <p className="flex h-[38px] shrink-0 justify-end overflow-hidden border border-[#3474b4] bg-[#55aaff] pr-[6px] text-[15px] leading-5 whitespace-nowrap text-white">
          <span>工具箱中，<a href="#enable" className="text-[#0000ff] underline">启用附</a></span>
        </p>
      </section>
      <section className="flex min-h-0 flex-[491] flex-col pt-[5px]">
        <DockTitle>{'\u00a0'}</DockTitle>
        <input aria-label="过滤" className="h-6 w-full shrink-0 rounded-[3px] border border-[#b4b4b4] bg-white px-2 outline-none" />
        <div className="my-[5px] flex h-[25px] shrink-0 justify-end gap-[6px] text-[14px]">
          <button type="button" className="rounded-[3px] border border-[#b4b4b4] bg-linear-to-b from-white to-[#f0f0f0] px-[5px] font-['Liberation_Mono',monospace]">Extent</button>
          <div className="grid w-[88px] items-center">
            <select aria-label="范围" className="col-start-1 row-start-1 h-full appearance-none rounded-[3px] border border-[#b4b4b4] bg-linear-to-b from-white to-[#f0f0f0] pl-1 font-['Liberation_Mono',monospace]">
              <option>All</option>
            </select>
            <Down className="pointer-events-none col-start-1 row-start-1 mr-[10px] justify-self-end" />
          </div>
        </div>
        <div className="min-h-0 flex-1 border border-[#b4b4b4] bg-white" />
      </section>
    </aside>
  );
}

/* ---------- elevation raster ---------- */

let seed = 4711;
const rnd = () => {
  seed = (seed * 16807) % 2147483647;
  return seed / 2147483647;
};

function grow(x, y, angle, length, depth, out) {
  let d = `M${x.toFixed(0)} ${y.toFixed(0)}`;
  for (let i = 0; i < 5; i++) {
    angle += (rnd() - 0.5) * 0.7;
    x += (Math.cos(angle) * length) / 5;
    y += (Math.sin(angle) * length) / 5;
    d += `L${x.toFixed(0)} ${y.toFixed(0)}`;
    if (depth > 0 && rnd() < 0.8) {
      grow(x, y, angle + (rnd() < 0.5 ? -1 : 1) * (0.5 + rnd() * 0.5), length * 0.5, depth - 1, out);
    }
  }
  out[depth] += d;
}

// every line: points, tone, reach of its side spurs
const ridges = [
  [[50, 500, 90, 545, 150, 575, 200, 620, 250, 655], 0.72, 50],
  [[250, 655, 320, 640, 400, 645, 440, 625], 0.78, 60],
  [[440, 625, 560, 635, 650, 615, 760, 600, 870, 610], 0.36, 55],
  [[60, 570, 130, 590, 180, 610], 0.3, 30],
  [[45, 768, 80, 770, 120, 785, 135, 830], 1, 36],
  [[45, 700, 130, 695, 200, 710, 320, 745], 0.5, 40],
  [[250, 430, 190, 400, 120, 340], 0.3, 80],
  [[250, 430, 320, 420, 340, 330], 0.26, 80],
  [[90, 480, 160, 500, 280, 520, 350, 560], 0.4, 70],
  [[400, 440, 450, 470, 500, 490, 560, 475], 0.45, 30],
  [[470, 890, 510, 930, 560, 950, 640, 970], 0.52, 45],
  [[590, 1020, 660, 1015, 740, 1040, 800, 1010], 0.5, 45],
  [[780, 990, 810, 1020, 850, 1050, 900, 1045, 950, 1060], 0.58, 30],
  [[520, 700, 600, 712, 700, 725, 860, 745], 0.24, 24],
  [[330, 850, 400, 820, 480, 850, 580, 830], 0.2, 50],
  [[60, 1080, 90, 1110, 160, 1145, 240, 1130, 310, 1080], 0.52, 50],
  [[400, 1060, 385, 1100, 400, 1130], 0.4, 22],
  [[160, 1040, 210, 1025, 240, 990], 0.4, 36],
  [[60, 1170, 110, 1210, 180, 1230, 260, 1280], 0.38, 70],
  [[100, 1230, 160, 1290, 230, 1340], 0.34, 50],
  [[330, 1330, 380, 1280, 440, 1250], 0.18, 40],
];

const valleys = [
  [370, 270, 390, 330, 385, 420, 370, 490, 420, 540],
  [110, 340, 100, 420, 160, 450, 210, 490],
  [370, 490, 300, 540, 295, 600],
  [420, 500, 480, 520, 500, 590, 520, 640],
  [560, 480, 590, 530, 600, 590, 590, 640],
  [600, 500, 690, 540, 660, 580, 670, 640],
  [850, 440, 870, 560, 790, 600],
  [45, 560, 90, 620, 180, 640, 250, 690, 310, 720],
  [240, 800, 290, 790, 480, 790, 600, 820],
  [480, 860, 560, 840, 720, 880, 960, 860],
  [420, 980, 480, 1010, 560, 1020, 620, 1080],
  [420, 980, 350, 1000, 250, 1080, 80, 1160],
  [150, 880, 220, 970, 350, 1000],
  [130, 1330, 200, 1240, 260, 1180, 360, 1150],
  [800, 900, 760, 950, 700, 980],
];

const toPath = (pts) => 'M' + pts.join(' ');

function spurs(pts, reach, gap) {
  const out = ['', '', ''];
  for (let i = 0; i + 3 < pts.length; i += 2) {
    const dx = pts[i + 2] - pts[i];
    const dy = pts[i + 3] - pts[i + 1];
    const angle = Math.atan2(dy, dx);
    const count = Math.max(2, Math.round(Math.hypot(dx, dy) / gap));
    for (let n = 0; n < count; n++) {
      const x = pts[i] + (dx * n) / count;
      const y = pts[i + 1] + (dy * n) / count;
      const size = reach * (0.6 + rnd() * 0.7);
      grow(x, y, angle + Math.PI / 2 + (rnd() - 0.5), size, 2, out);
      grow(x, y, angle - Math.PI / 2 + (rnd() - 0.5), size, 2, out);
    }
  }
  return out;
}

const ridgeArt = ridges.map(([pts, tone, reach]) => ({ line: toPath(pts), tone, reach, spurs: spurs(pts, reach, 17) }));
const valleyArt = valleys.map((pts) => ({ line: toPath(pts), spurs: spurs(pts, 60, 24) }));

function Elevation() {
  return (
    <svg viewBox="288 170 1340 827" className="size-full" role="img" aria-label="ASTGTM_N34E113Y">
      <defs>
        <clipPath id="tile"><path d="M612 220L1215 205 1237 938 627 953z" /></clipPath>
        <linearGradient id="base" x1="0" x2="1">
          <stop offset="0" stopColor="#2a2a2a" />
          <stop offset=".45" stopColor="#1e1e1e" />
          <stop offset=".75" stopColor="#121212" />
          <stop offset="1" stopColor="#0c0c0c" />
        </linearGradient>
        <filter id="wide" x="-50%" y="-50%" width="200%" height="200%"><feGaussianBlur stdDeviation="28" /></filter>
        <filter id="near" x="-50%" y="-50%" width="200%" height="200%"><feGaussianBlur stdDeviation="13" /></filter>
        <filter id="crest" x="-50%" y="-50%" width="200%" height="200%">
          <feTurbulence type="fractalNoise" baseFrequency=".05" numOctaves="3" seed="3" result="n" />
          <feGaussianBlur in="SourceGraphic" stdDeviation="4" result="b" />
          <feDisplacementMap in="b" in2="n" scale="26" xChannelSelector="R" yChannelSelector="G" />
        </filter>
        <filter id="rough" x="-10%" y="-10%" width="120%" height="120%">
          <feTurbulence type="fractalNoise" baseFrequency=".06" numOctaves="3" seed="3" result="n" />
          <feDisplacementMap in="SourceGraphic" in2="n" scale="12" xChannelSelector="R" yChannelSelector="G" />
          <feGaussianBlur stdDeviation="1.6" />
        </filter>
      </defs>
      <g clipPath="url(#tile)">
        <rect x="600" y="200" width="640" height="760" fill="url(#base)" />
        <g transform="translate(600 190) scale(.4209 .4975)" fill="none" strokeLinecap="round" strokeLinejoin="round">
          <g filter="url(#wide)">
            <path d="M505 160L545 110 760 110 800 250 900 450 960 700 800 640 500 560 60 480 60 400 290 270 360 210z" fill="#222" />
            <path d="M60 320L330 290 360 440 340 500 60 460z" fill="#3c3c3c" />
            <path d="M20 480L350 490 500 590 420 680 230 690 300 820 520 900 340 980 0 940z" fill="#545454" />
            <path d="M500 590L860 590 880 850 560 870 520 780 600 690z" fill="#2c2c2c" />
            <path d="M30 1060L300 1030 420 1090 350 1180 280 1360 230 1370 60 1240z" fill="#4e4e4e" />
            <path d="M420 850L660 920 860 1010 860 1060 640 1050 440 960z" fill="#393939" />
            <path d="M300 1400L420 1300 560 1300 700 1370 500 1460z" fill="#242424" />
            {ridgeArt.map((r, i) => <path key={i} d={r.line} stroke="#ddd" strokeWidth={r.reach * 1.3} opacity={r.tone * 0.28} />)}
          </g>
          <path d="M0 0H1000L860 180 790 160 770 118 540 112 505 160 360 208 340 250 250 300 120 330 0 310z" fill="#0d0d0d" filter="url(#rough)" />
          <path d="M800 0H1600V1600H1050L960 900 900 400z" fill="#0d0d0d" opacity=".8" filter="url(#wide)" />
          <path d="M505 160Q530 115 560 112L770 118 790 170 700 190 560 170z" fill="#303030" opacity=".6" filter="url(#near)" />
          <path d="M320 730Q400 660 500 670T600 740 400 780zM420 1090Q560 1050 640 1110T800 1330 560 1260 430 1200z" fill="#141414" opacity=".7" filter="url(#wide)" />
          <path d="M0 1270L120 1320 200 1400 320 1560 0 1560z" fill="#141414" filter="url(#wide)" />
          <g filter="url(#near)" stroke="#e8e8e8">
            {ridgeArt.map((r, i) => <path key={i} d={r.line} strokeWidth={r.reach * 0.7} opacity={r.tone * 0.5} />)}
          </g>
          <g filter="url(#rough)" stroke="#e2e2e2">
            {ridgeArt.map((r, i) => (
              <g key={i} opacity={r.tone}>
                <path d={r.spurs[0]} strokeWidth="2" opacity=".18" />
                <path d={r.spurs[1]} strokeWidth="3" opacity=".22" />
                <path d={r.spurs[2]} strokeWidth="4" opacity=".26" />
              </g>
            ))}
          </g>
          <g filter="url(#rough)" stroke="#161616">
            {valleyArt.map((v, i) => (
              <g key={i}>
                <path d={v.spurs[0]} strokeWidth="2.4" opacity=".22" />
                <path d={v.spurs[1]} strokeWidth="3" opacity=".3" />
                <path d={v.spurs[2]} strokeWidth="4" opacity=".36" />
                <path d={v.line} strokeWidth="9" opacity=".55" />
              </g>
            ))}
          </g>
          <g filter="url(#crest)" stroke="#fff">
            {ridgeArt.map((r, i) => <path key={i} d={r.line} strokeWidth="8" opacity={r.tone * r.tone * 0.8} />)}
          </g>
          <g filter="url(#rough)" stroke="#999">
            <path d="M310 1388Q340 1372 380 1368M395 1360Q440 1350 500 1358M550 1358L620 1356M640 1360L685 1364M55 1048L150 1038M450 1308Q490 1290 520 1300" strokeWidth="6" opacity=".5" />
            <path d="M310 1400Q350 1440 370 1490M320 1330Q370 1270 450 1255" strokeWidth="4" opacity=".25" />
          </g>
        </g>
      </g>
    </svg>
  );
}

/* ---------- algorithm dialog ---------- */

// Chinese runs are set two pixels larger than the latin ones beside them
const Mixed = ({ children }) =>
  children.split(/([\u2014-\u9fff\uff00-\uffef]+)/).map((part, i) => (i % 2 ? <span key={i} className="text-[15px]">{part}</span> : part));

const versions = ['QGIS版本：3.16.3-Hannover', 'QGIS代码版本：94ac9f21b8', 'Qt版本：5.11.2', 'GDAL版本：3.1.4', 'GEOS版本：3.8.1-CAPI-1.13.3', 'PROJ版本：Rel. 6.3.2, May 1st, 2020'];

const params = `{ 'BAND' : 1, 'CREATE_3D' : False, 'EXTRA' : '', 'FIELD_NAME' : 'ELEV',
'IGNORE_NODATA' : False, 'INPUT' : '/vsizip/D:/Download/
ASTGTM_N34E113.img.zip/ASTGTM_N34E113Y.img', 'INTERVAL' : 40, 'NODATA' :
None, 'OFFSET' : 0, 'OUTPUT' : 'TEMPORARY_OUTPUT' }`;

const command = `gdal_contour -b 1 -a ELEV -i 40.0 -f "GPKG" /vsizip/D:/Download/
ASTGTM_N34E113.img.zip/ASTGTM_N34E113Y.img C:/Users/chongzhi/AppData/
Local/Temp/processing_HzuNFi/1ec7287cc3e949d0935cfb1a6e53d98a/
OUTPUT.gpkg`;

function ContourDialog() {
  return (
    <div role="dialog" aria-label="等值线" className="absolute top-[305px] left-[1105px] w-[689px] border border-[#666] bg-[#efefef] font-['Liberation_Mono','Noto_Sans_CJK_SC',monospace] text-[13px] shadow-[0_6px_22px_rgba(0,0,0,0.4)]">
      <div className="flex h-[35px] items-center bg-white pr-[10px] pl-2 font-['Noto_Sans','Noto_Sans_CJK_SC',sans-serif] text-[15px]">
        <Icon name="qgis" size="size-5" />
        <span className="ml-1 flex-1">等值线</span>
        <button type="button" aria-label="关闭" className="p-1"><svg viewBox="0 0 11 11" className="size-[11px]"><path d="M.5.5l10 10M10.5.5l-10 10" stroke="#222" strokeWidth="1.2" /></svg></button>
      </div>
      <div className="px-3 pt-[14px] pb-3">
        <div role="tablist" className="flex items-end text-[15px]">
          <button type="button" role="tab" aria-selected="false" className="h-[26px] w-[60px] rounded-t-[3px] border border-b-0 border-[#b4b4b4] bg-[#e8e8e8]">参数</button>
          <button type="button" role="tab" aria-selected="true" className="-mb-px -ml-px h-[29px] w-[60px] rounded-t-[3px] border border-b-0 border-[#b4b4b4] bg-[#fcfcfc]">记录</button>
        </div>
        <div className="border border-[#a9a9a9] bg-[#fcfcfc] p-px">
          <div className="border border-[#b4b4b4] bg-white px-1 pt-1 pb-[7px] leading-[17px]">
            {versions.map((line) => <p key={line} className="h-[17px] text-[#808080]"><Mixed>{line}</Mixed></p>)}
            <p className="h-[17px] text-[15px]">正在处理算法⋯</p>
            <p className="h-[17px] text-[15px] font-bold">正在启动 “等值线” 算法⋯</p>
            <p className="h-[17px]">Input parameters:</p>
            <pre className="font-[inherit] text-[15px]">{params}</pre>
            <p className="mt-[17px] h-[17px]">GDAL command:</p>
            <pre className="font-[inherit] text-[15px]">{command}</pre>
            <p className="h-[17px]">GDAL command output:</p>
          </div>
          <div className="flex h-7 items-center justify-end gap-3 pr-[6px]">
            {[['save', '保存'], ['copy', '复制'], ['broom', '清除']].map(([name, label]) => (
              <button type="button" key={name} aria-label={label}><Icon name={name} size="size-[17px]" /></button>
            ))}
          </div>
        </div>
        <p className="mt-1 h-[22px] text-[15px] leading-[22px]">正在处理算法⋯</p>
        <div className="mt-[3px] flex gap-[7px]">
          <div role="progressbar" aria-label="进度" className="h-6 flex-1 rounded-[3px] border border-[#0a5ca8] bg-[#078af8] bg-[repeating-linear-gradient(135deg,rgba(0,0,0,0.06)_0,rgba(0,0,0,0.06)_10px,transparent_10px,transparent_20px)]" />
          <button type="button" disabled className="h-6 w-20 rounded-[3px] border border-[#c4c4c4] bg-[#f7f7f7] text-[15px] leading-5 text-[#8a8a8a]">取消</button>
        </div>
        <div className="mt-2 flex gap-[7px]">
          <button type="button" disabled className="mr-auto h-6 w-[153px] rounded-[3px] border border-[#c4c4c4] bg-[#f7f7f7] text-[15px] leading-5 text-[#8a8a8a]">以批处理方式运行<span className="text-[13px]">...</span></button>
          <button type="button" className="h-6 w-20 rounded-[3px] border border-[#4aa3e8] bg-linear-to-b from-[#fafdff] to-[#e6eef5] text-[14px]">Close</button>
          <button type="button" className="h-6 w-20 rounded-[3px] border border-[#a9a9a9] bg-linear-to-b from-white to-[#f0f0f0] text-[14px]">Help</button>
        </div>
      </div>
    </div>
  );
}

/* ---------- status bar ---------- */

const Spin = ({ id, value, width }) => (
  <span className={`flex h-[23px] overflow-hidden rounded-[3px] border border-[#b4b4b4] bg-white ${width}`}>
    <input id={id} defaultValue={value} className="min-w-0 flex-1 pl-1 outline-none" />
    <span className="flex w-4 flex-col items-center justify-center gap-1 border-l border-[#b4b4b4] bg-[#f5f5f5]">
      <Down className="rotate-180" />
      <Down />
    </span>
  </span>
);

function StatusBar() {
  const [render, setRender] = useState(true);
  return (
    <footer className="flex h-8 items-center pr-[5px] pl-1 font-['Liberation_Mono','Noto_Sans_CJK_SC',monospace] text-xs whitespace-nowrap">
      <label className="mr-auto flex h-[23px] w-[243px] items-center rounded-[3px] border border-[#b4b4b4] bg-white pl-2">
        <Search className="size-3" />
        <input aria-label="定位" placeholder="键入以定位(Ctrl+K)" className="ml-2 min-w-0 flex-1 text-[14px] outline-none placeholder:text-[#808080]" />
      </label>
      <div className="mr-[15px] h-4 w-[200px] rounded-[3px] border border-[#b4b4b4] bg-[#fafafa] bg-[repeating-linear-gradient(135deg,#f4f4f4_0,#f4f4f4_10px,#fcfcfc_10px,#fcfcfc_20px)]" />
      <label htmlFor="coord" className="mr-[3px] text-[13px]">坐标</label>
      <input id="coord" defaultValue="826420,3775666" className="mr-1 h-[23px] w-[113px] rounded-[3px] border border-[#b4b4b4] bg-white px-[5px] outline-none" />
      <svg viewBox="0 0 20 20" className="mr-3 size-[18px]" fill="none" stroke="#222" strokeWidth="1.6" aria-hidden="true">
        <path d="M3 3c3-3 6 0 9 6M3 3c-2 4 1 8 6 11M8 2l6 10M4 10l7-7M2 7l6-4" />
        <circle cx="13" cy="14" r="5" fill="#fff" />
        <circle cx="13" cy="14" r="1.5" />
        <path d="M15 5l4-3M15 9l2-2" />
      </svg>
      <label htmlFor="scale" className="mr-[3px] text-[13px]">比例尺</label>
      <span className="grid h-[23px] w-[104px] items-center">
        <select id="scale" className="col-start-1 row-start-1 h-full appearance-none rounded-[3px] border border-[#b4b4b4] bg-white pl-[3px]">
          <option>1:710021</option>
        </select>
        <span className="pointer-events-none col-start-1 row-start-1 mr-px flex h-[21px] w-[25px] items-center justify-center justify-self-end bg-[#f1f1f1]"><Down /></span>
      </span>
      <svg viewBox="0 0 16 18" className="mr-[9px] ml-3 h-[18px] w-4" aria-hidden="true">
        <path d="M3.5 9V5.5a4.5 4.5 0 0 1 9 0V9" fill="none" stroke="#999" strokeWidth="2" />
        <rect x="1" y="8" width="14" height="10" rx="1.5" fill="#666" />
      </svg>
      <label htmlFor="zoom" className="mr-[3px] text-[13px]">放大镜</label>
      <Spin id="zoom" value="100%" width="w-[105px]" />
      <label htmlFor="rot" className="mr-[9px] ml-[9px] text-[13px]">旋转角度</label>
      <Spin id="rot" value="0.0°" width="w-[102px]" />
      <label className="ml-[5px] flex items-center gap-[6px] text-[13px]">
        <Check checked={render} onChange={() => setRender(!render)} />渲染
      </label>
      <button type="button" className="mr-[26px] ml-[17px] flex items-center gap-1">
        <svg viewBox="0 0 24 24" className="size-[18px]" aria-hidden="true">
          <circle cx="12" cy="11" r="9" fill="#666" />
          <path d="M12 2v18M3 11h18M5 6h14M5 16h14M12 2q-8 9 0 18M12 2q8 9 0 18" stroke="#ddd" strokeWidth=".8" fill="none" />
          <path d="M6 22h12" stroke="#666" strokeWidth="2" />
        </svg>
        EPSG:32649
      </button>
      <button type="button" aria-label="消息">
        <svg viewBox="0 0 20 18" className="h-[18px] w-5"><ellipse cx="10" cy="8" rx="9" ry="8" fill="#666" /><path d="M12 14l6 4-1-7z" fill="#666" /><path d="M5 8h2M9 8h2M13 8h2" stroke="#fff" strokeWidth="2" /></svg>
      </button>
    </footer>
  );
}

/* ---------- taskbar ---------- */

const shell = [
  ['Cortana', <circle cx="15" cy="15" r="7.5" fill="none" stroke="#111" strokeWidth="3" />],
  ['任务视图', <g fill="none" stroke="#111" strokeWidth="1.4"><path d="M6 6v3h12V6M6 24v-3h12v3M6 11.5h12v7H6zM23 5v4M23 14v11" /><rect x="22" y="10.5" width="2" height="2" fill="#111" /></g>],
];

const apps = [
  ['Edge', <g>
    <path d="M1 13C3-2 28-3 29 12c0 4-3 6-7 6-3 0-5-1-4-3 2-5-9-8-17-2z" fill="#37c3d6" />
    <path d="M16 0c8 0 13 6 13 12 0 4-3 6-7 6-3 0-5-1-4-3 3-6-4-11-2-15z" fill="#5bd078" />
    <path d="M1 13c5-6 14-4 15-1-6 0-7 12 3 15-9 6-20-3-18-14z" fill="#1580d8" />
    <path d="M12 15c-3 7 6 12 15 8-3 6-13 9-18 2-3-4-1-8 3-10z" fill="#0c59a4" />
  </g>],
  ['文件资源管理器', <g><path d="M1 3h11l2 3h10v4H1z" fill="#e09b10" /><rect x="1" y="7" width="27" height="19" rx="1" fill="#ffd55f" /><path d="M6 27V17q0-2 2-2h13q2 0 2 2v10h-5v-6h-7v6z" fill="#3f95da" /></g>, 'bg-[#0078d7]'],
  ['邮件', <g fill="#3f4346"><path d="M0 12L15 3l15 9v14H0z" /><path d="M1 11h28l-11 8 5 6-10-7z" fill="#cfdde6" /></g>],
  ['VS Code', <g><path d="M22 0l7 3v24l-7 3L8 18l-4 4-3-2 5-5-5-5 3-2 4 4z" fill="#1f8ad2" /><path d="M22 8v14l-9-7z" fill="#cfdde6" /><path d="M22 0l7 3v24l-7 3z" fill="#33a9f0" /></g>],
  ['Chrome', <g><circle cx="15" cy="15" r="13.5" fill="#f7ce45" /><path d="M3.3 8.2A13.5 13.5 0 0 1 26.7 8.2H15z" fill="#d94a3d" /><path d="M3.3 8.2A13.5 13.5 0 0 0 14 28.5l5.5-10.5L9 18z" fill="#2c9a58" /><path d="M3.3 8.2L9 18l6-9.8z" fill="#d94a3d" /><circle cx="15" cy="15" r="6.5" fill="#fff" /><circle cx="15" cy="15" r="5" fill="#3f7fea" /></g>, 'bg-[#0078d7]'],
  ['QQ', <g><ellipse cx="15" cy="18" rx="11" ry="9" fill="#111" /><ellipse cx="15" cy="9" rx="8" ry="9" fill="#111" /><ellipse cx="15" cy="21" rx="7.5" ry="7" fill="#fff" /><ellipse cx="12" cy="7" rx="2" ry="3" fill="#fff" /><ellipse cx="18" cy="7" rx="2" ry="3" fill="#fff" /><circle cx="12.5" cy="7.5" r="1" /><circle cx="17.5" cy="7.5" r="1" /><ellipse cx="15" cy="11.5" rx="5" ry="1.7" fill="#f5b319" /><path d="M7 13q8 5 16 0v4q-6 3-10 2v4H9v-5l-2-1z" fill="#e22020" /><path d="M6 28h7M17 28h7" stroke="#f5a319" strokeWidth="3" /></g>],
  ['微信', <g><ellipse cx="10" cy="11" rx="10" ry="9" fill="#2fd06b" /><path d="M4 17l0 5 5-3z" fill="#2fd06b" /><circle cx="7" cy="8.5" r="1.3" fill="#135" /><circle cx="13" cy="8.5" r="1.3" fill="#135" /><ellipse cx="21" cy="19" rx="8.5" ry="7.5" fill="#e8e8e8" /><path d="M24 25l4 2-1-4z" fill="#e8e8e8" /><circle cx="18" cy="17" r="1.2" fill="#777" /><circle cx="24" cy="17" r="1.2" fill="#777" /></g>],
  ['迅雷', <g><circle cx="15" cy="15" r="13.5" fill="#0d6fd6" /><path d="M12 6l-3 9 5 2-1 8 9-11-6-2 3-4z" fill="#fff" /></g>],
  ['百度网盘', <g><rect x="0" y="0" width="30" height="30" rx="5" fill="#fff" /><g fill="none" strokeWidth="2.8"><circle cx="15" cy="10" r="4" stroke="#e8405c" /><circle cx="9.5" cy="17.5" r="4" stroke="#2f9df4" /><circle cx="20.5" cy="17.5" r="4" stroke="#39b8ee" /></g><path d="M10 29h5" stroke="#e8405c" strokeWidth="2" /><path d="M15 29h5" stroke="#2f7df4" strokeWidth="2" /></g>],
  ['QGIS', <g transform="scale(1.25)"><Qgis /></g>, 'bg-[#4cd63a]'],
  ['腾讯会议', <g><rect x="1" y="1" width="28" height="28" rx="3" fill="#0b6cf5" /><path d="M3 19l6-8q2-1 4 2l2 2 4-5q2-2 4 1 4 5 4 8-3 1-6 0l-2-3-2 3q-3 1-5 0l-1-2-2 2q-3 1-6 0z" fill="#fff" /></g>],
  ['照片', <g><path d="M4 5Q15-4 25 9" stroke="#3b3f42" strokeWidth="3.5" fill="none" /><circle cx="15" cy="16" r="13" fill="#3f4548" /><path d="M3 22l8-8 5 5 5-7 7 8" stroke="#cfd6da" strokeWidth="2" fill="none" /><circle cx="10" cy="9" r="2" fill="#cfd6da" /></g>],
  ['传输工具', <g><rect x="0" y="0" width="30" height="30" fill="#0d79dc" /><path d="M9 22V12l12-5v3l-9 4v7zM14 15l8-3v3l-5 2v1l4-1v4l-7 3z" fill="none" stroke="#fff" strokeWidth="1.5" /></g>],
  ['Xbox', <g><circle cx="15" cy="15" r="13.5" fill="#111" /><path d="M5 25Q9 14 15 10q6 4 10 15" stroke="#cfdde6" strokeWidth="2.6" fill="none" /><path d="M8 4q4 0 7 3 3-3 7-3" stroke="#cfdde6" strokeWidth="1.8" fill="none" /></g>],
];

const AppButton = ({ label, art, line }) => (
  <button type="button" aria-label={label} className={`flex w-[60px] flex-col items-center ${label === 'QGIS' ? 'bg-[#b4dab8]' : ''}`}>
    <svg viewBox="0 0 30 30" className="mt-[10px] size-[30px]">{art}</svg>
    {line && <span className={`mt-auto h-[3px] ${line} ${label === 'QGIS' ? 'w-full' : 'w-[49px]'}`} />}
  </button>
);

function Taskbar() {
  return (
    <div className="relative flex h-[50px] shrink-0 items-stretch bg-linear-to-r from-[#d3dde5] via-[#cfdde7] to-[#d2d2d4]">
      <button type="button" aria-label="开始" className="flex w-[60px] items-center justify-center">
        <svg viewBox="0 0 16 16" className="size-4"><path d="M0 2l7-1v6.5H0zM8 .9L16 0v7.5H8zM0 8.5h7V15l-7-1zM8 8.5h8V16l-8-.9z" fill="#111" /></svg>
      </button>
      <label className="flex w-[426px] items-center border border-[#c6cacd] bg-white pl-[13px]">
        <svg viewBox="0 0 20 20" className="size-5" fill="none" stroke="#222" strokeWidth="1.5" aria-hidden="true"><circle cx="12.5" cy="7.5" r="6.5" /><path d="M8 12l-7 7" /></svg>
        <input aria-label="搜索" placeholder="在这里输入你要搜索的内容" className="ml-4 min-w-0 flex-1 text-[19px] outline-none placeholder:text-[#333]" />
      </label>
      <div className="flex pr-[3px]">
        {shell.map(([label, art]) => <AppButton key={label} label={label} art={art} />)}
      </div>
      {apps.map(([label, art, line]) => <AppButton key={label} label={label} art={art} line={line} />)}
      <div className="ml-auto flex items-center pr-1">
        <svg viewBox="0 0 60 26" className="h-[26px] w-[60px]" aria-label="电量">
          <path d="M3 1v6M9 1v6" stroke="#fff" strokeWidth="2.5" /><path d="M1 7h11v6q0 4-4 5v7H5v-7q-4-1-4-5z" fill="#fff" stroke="#777" strokeWidth=".8" />
          <rect x="15" y="1.5" width="41" height="22" rx="2" fill="#fff" stroke="#777" /><rect x="57" y="8" width="3" height="9" fill="#fff" stroke="#777" strokeWidth=".6" />
          <rect x="18" y="4" width="35" height="17" fill="#12924a" stroke="#555" />
          <text x="19.5" y="17" fontSize="13" fontFamily="Open Sans, sans-serif" fill="#fff">100%</text>
        </svg>
        <svg viewBox="0 0 12 8" className="ml-[9px] h-2 w-3" fill="none" stroke="#111" strokeWidth="1.5" aria-hidden="true"><path d="M0 7l6-6 6 6" /></svg>
        <svg viewBox="0 0 20 20" className="ml-[14px] size-5" fill="none" stroke="#222" strokeWidth="1.5" aria-hidden="true"><path d="M1 3l18-2v16H1zM6 9q4-5 7 0M14 6v3h-3M13 12q-4 4-7 0M5 15v-3h3" /><circle cx="16" cy="16" r="4" fill="#ff9800" stroke="none" /></svg>
        <svg viewBox="0 0 20 16" className="ml-[10px] h-4 w-5" aria-hidden="true"><rect x="6" y="4" width="12" height="9" fill="none" stroke="#111" /><rect x="7.5" y="5.5" width="9" height="6" fill="#111" /><path d="M18 6.5h2v4h-2z" fill="#111" /><path d="M1.5 0v3M4.5 0v3M.5 3h5v2q-1 2-2.5 2T.5 5z" fill="#111" stroke="#111" /></svg>
        <svg viewBox="0 0 18 18" className="ml-[14px] size-[18px]" fill="none" stroke="#444" strokeWidth="1.6" aria-hidden="true"><path d="M16 1A17 17 0 0 0 2 13M16 6a12 12 0 0 0-10 9M16 11a6 6 0 0 0-5 5" /></svg>
        <svg viewBox="0 0 20 18" className="ml-2 h-[18px] w-5" fill="none" stroke="#222" strokeWidth="1.3" aria-hidden="true"><path d="M1 6h4l5-4v14l-5-4H1zM13 6q2 3 0 6M15.5 4q4 5 0 10M18 2q4 7 0 14" /></svg>
        <span className="ml-3 text-[17px]">英</span>
        <time className="ml-3 w-[74px] text-center text-[15px] leading-[23px] text-[#111]">21:14<br />2021/3/4</time>
        <svg viewBox="0 0 32 30" className="ml-6 h-[30px] w-8" aria-label="通知"><path d="M1 1h20v15H9l-4 4v-4H1z" fill="#111" /><path d="M5 6h12M5 11h12" stroke="#ddd" strokeWidth="1.5" /><circle cx="20" cy="20" r="9" fill="#d5d5d7" stroke="#333" /><text x="16.5" y="25" fontSize="13" fontFamily="Open Sans, sans-serif" fill="#111">2</text></svg>
        <span className="ml-[14px] h-[50px] w-px bg-[#999]" />
      </div>
      <span className="absolute right-[10px] bottom-[7px] font-['Liberation_Sans',sans-serif] text-base text-white/80 text-shadow-[0_0_2px_rgba(80,80,80,0.7)]">https://blog.csdn.net/weixin_47062907</span>
    </div>
  );
}

export default function App() {
  return (
    <div className="relative flex h-screen min-w-0 flex-col overflow-hidden bg-[#efefef] font-['Noto_Sans','Noto_Sans_CJK_SC',sans-serif] text-black">
      <Header />
      <main className="flex min-h-0 flex-1 gap-[7px]">
        <LeftDocks />
        <div className="mt-px min-w-0 flex-1 overflow-hidden border border-[#b4b4b4] bg-white"><Elevation /></div>
        <RightDocks />
      </main>
      <StatusBar />
      <Taskbar />
      <ContourDialog />
      <div className="absolute inset-x-0 top-0 mx-auto flex h-[2px] w-[301px] bg-[#e5e5e5]"><span className="w-[60px] bg-[#0078d7]" /></div>
    </div>
  );
}
